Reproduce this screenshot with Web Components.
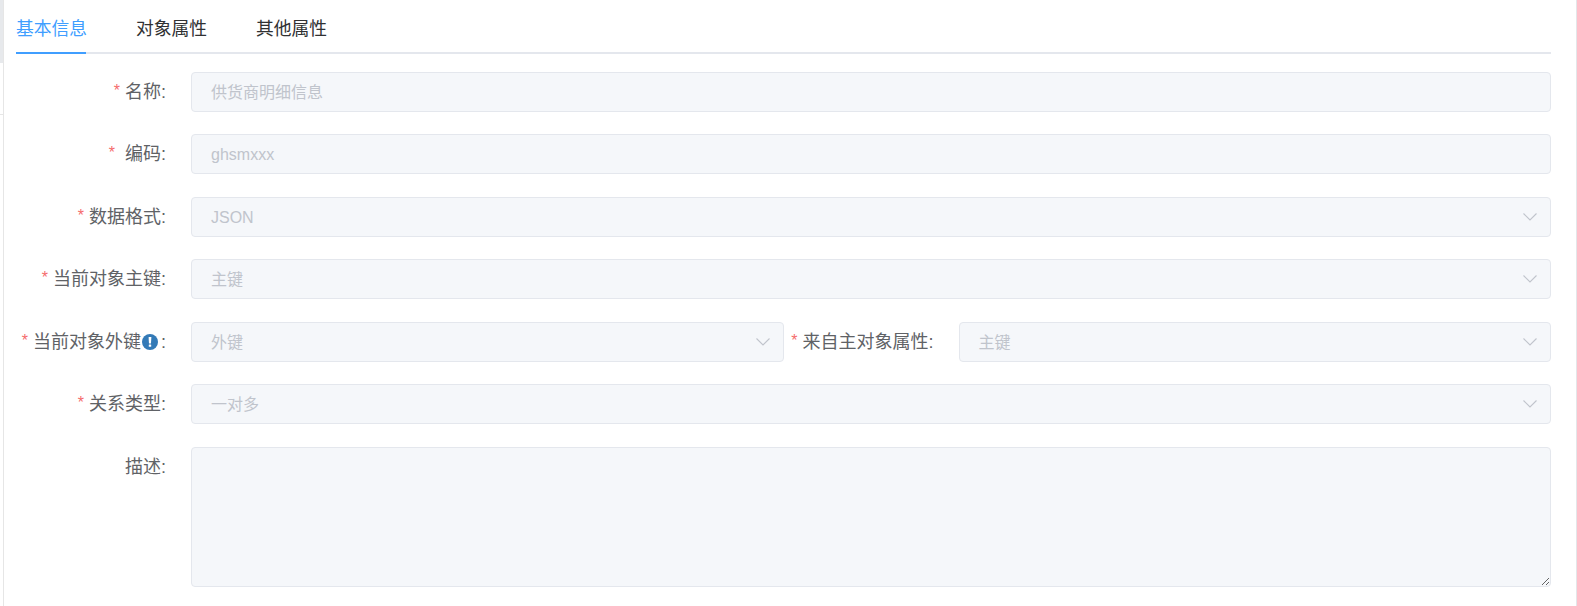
<!DOCTYPE html>
<html lang="zh">
<head>
<meta charset="utf-8">
<title>基本信息</title>
<style>
html,body{margin:0;padding:0;background:#fff;height:606px;overflow:hidden;font-family:"Liberation Sans","Noto Sans CJK SC",sans-serif;}
</style>
</head>
<body>
<app-shell>
  <object-form>
    <tab-bar>
      <tab-item active>基本信息</tab-item>
      <tab-item>对象属性</tab-item>
      <tab-item>其他属性</tab-item>
    </tab-bar>
    <form-row>
      <field-label required>名称</field-label>
      <form-control>供货商明细信息</form-control>
    </form-row>
    <form-row>
      <field-label required wide>编码</field-label>
      <form-control>ghsmxxx</form-control>
    </form-row>
    <form-row>
      <field-label required>数据格式</field-label>
      <form-control select>JSON</form-control>
    </form-row>
    <form-row>
      <field-label required>当前对象主键</field-label>
      <form-control select>主键</form-control>
    </form-row>
    <form-row split>
      <field-label required>当前对象外键<info-icon></info-icon></field-label>
      <form-control select>外键</form-control>
      <field-label required>来自主对象属性</field-label>
      <form-control select>主键</form-control>
    </form-row>
    <form-row>
      <field-label required>关系类型</field-label>
      <form-control select>一对多</form-control>
    </form-row>
    <form-row last>
      <field-label>描述</field-label>
      <area-control></area-control>
    </form-row>
  </object-form>
</app-shell>
<script>
function define(name, css, html) {
  customElements.define(name, class extends HTMLElement {
    constructor() {
      super();
      this.attachShadow({mode: 'open'}).innerHTML = '<style>' + css + '</style>' + html;
    }
  });
}
define('app-shell', `
  :host{display:flex;width:1577px;height:606px;box-sizing:border-box;border-right:1px solid #e4e6e9;}
  .edge{width:3px;flex:none;display:flex;flex-direction:column;}
  .block{height:63px;background:#e7e9ec;width:4px;}
  .rule{height:1px;margin-top:51px;background:#e6e6e6;}
  .panel{flex:1;min-width:0;border-left:1px solid #e6e6e6;padding:0 25px 0 12px;}
`, `<div class="edge"><div class="block"></div><div class="rule"></div></div><div class="panel"><slot></slot></div>`);
define('object-form', `:host{display:block;}`, `<slot></slot>`);
define('tab-bar', `
  :host{display:flex;gap:50px;height:52px;border-bottom:2px solid #e4e7ed;margin-bottom:18px;}
`, `<slot></slot>`);
define('tab-item', `
  :host{display:block;width:70px;height:54px;box-sizing:border-box;line-height:58px;font-size:17.8px;color:#303133;border-bottom:2px solid transparent;white-space:nowrap;}
  :host([active]){color:#409eff;border-bottom-color:#409eff;}
`, `<slot></slot>`);
define('form-row', `
  :host{display:grid;grid-template-columns:175px 1fr;margin-bottom:22.49px;}
  :host([split]){grid-template-columns:175px 1fr 175px 1fr;}
  :host([last]){margin-bottom:0;}
`, `<slot></slot>`);
define('field-label', `
  :host{display:block;text-align:right;padding-right:25px;box-sizing:border-box;font-size:18px;line-height:41px;height:40px;color:#606266;white-space:nowrap;}
  .star{color:#f56c6c;font-size:16px;margin-right:5px;display:none;vertical-align:2px;line-height:1;}
  :host([required]) .star{display:inline;}
  :host([wide]) .star{margin-right:10px;}
`, `<span class="star">*</span><slot></slot><span>:</span>`);
define('info-icon', `
  :host{display:inline-block;width:16px;height:16px;vertical-align:-2px;margin:0 3px 0 1px;}
  svg{display:block;}
`, `<svg width="16" height="16" viewBox="0 0 16 16"><circle cx="8" cy="8" r="8" fill="#337ab7"/><path d="M6.600 3h2.800l-.4 6.400H7z" fill="#fff"/><rect x="6.800" y="10.400" width="2.400" height="2.400" rx=".4" fill="#fff"/></svg>`);
define('form-control', `
  :host{display:flex;align-items:center;height:40px;box-sizing:border-box;border:1px solid #e4e7ed;border-radius:4px;background:#f5f7fa;color:#c0c4cc;font-size:16px;padding:0 12px 0 19px;min-width:0;}
  .text{flex:1;white-space:nowrap;line-height:22px;height:22px;margin-top:2px;}
  svg{display:none;flex:none;}
  :host([select]) svg{display:block;}
`, `<span class="text"><slot></slot></span><svg width="16" height="10" viewBox="0 0 16 10" fill="none"><path d="M1.500 1.500 8 8l6.500-6.500" stroke="#c0c4cc" stroke-width="1.100"/></svg>`);
define('area-control', `
  :host{display:block;}
  textarea{display:block;width:100%;height:140px;box-sizing:border-box;margin:0;border:1px solid #e4e7ed;border-radius:4px;background:#f5f7fa;color:#c0c4cc;font:16px "Liberation Sans","Noto Sans CJK SC",sans-serif;padding:5px 19px;resize:vertical;outline:none;}
`, `<textarea disabled></textarea>`);
</script>
</body>
</html>
